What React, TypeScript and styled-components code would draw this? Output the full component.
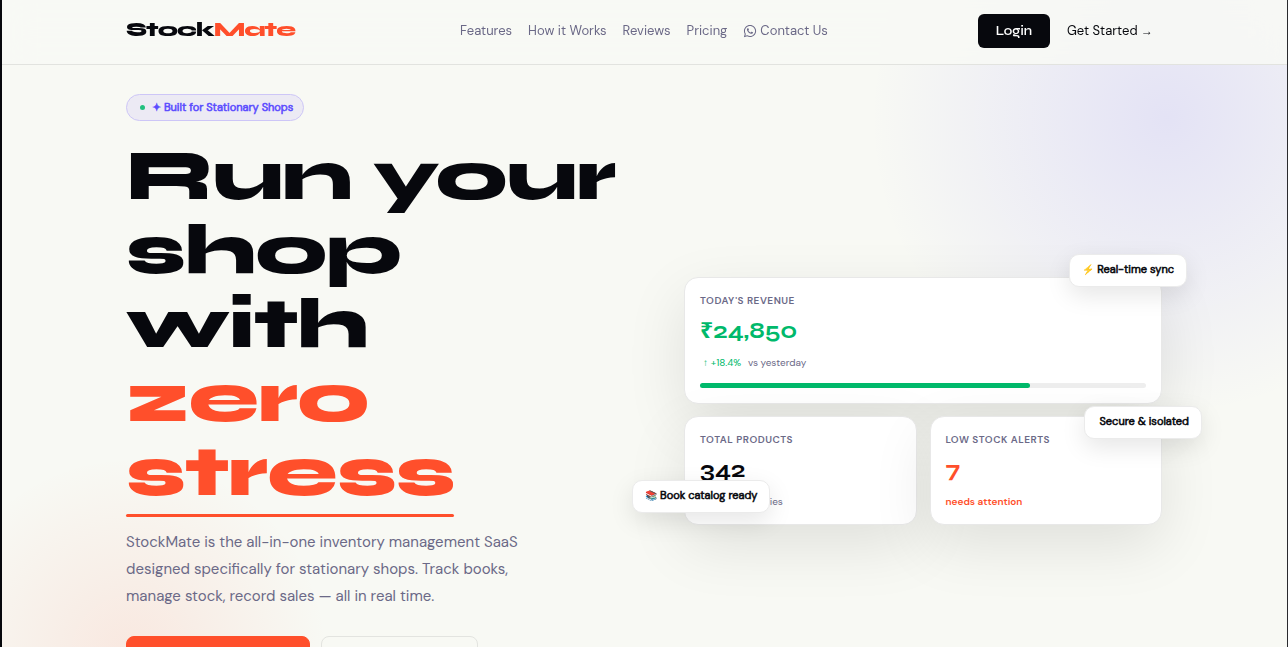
import React from "react";
import styled, { createGlobalStyle, css } from "styled-components";
import { FaWhatsapp } from "react-icons/fa";

const ink = "#07080d";
const paper = "#f8f9f4";
const muted = "#6b6987";
const coral = "#ff4f2b";
const green = "#00b96b";
const violet = "#5b4cff";

const display = `Syne, "DejaVu Sans", sans-serif`;
const body = `"DM Sans", Inter, sans-serif`;

const GlobalStyle = createGlobalStyle`
  *, *::before, *::after { box-sizing: border-box; }
  body {
    margin: 0;
    background: ${paper};
    color: ${ink};
    font-family: ${body};
  }
  a { color: inherit; text-decoration: none; }
  button { font: inherit; cursor: pointer; }
`;

const chipText = css`
  font-size: 11px;
  font-weight: 400;
  white-space: nowrap;
  -webkit-text-stroke: 0.05em currentColor;
`;

const Page = styled.div`
  position: relative;
  display: flex;
  flex-direction: column;
  height: 100vh;
  min-height: 480px;
  overflow: hidden;
  border-left: 2px solid ${ink};
  border-right: 1px solid #2a2a2e;
  background: ${paper};
`;

const Glow = styled.div<{ $size: number; $color: string }>`
  position: absolute;
  width: ${(p) => p.$size}px;
  height: ${(p) => p.$size}px;
  border-radius: 50%;
  background: radial-gradient(circle, ${(p) => p.$color} 0%, transparent 70%);
  pointer-events: none;
`;

const VioletGlow = styled(Glow)`
  top: -182px;
  right: -180px;
`;

const CoralGlow = styled(Glow)`
  bottom: -208px;
  left: -72px;
`;

const Header = styled.header`
  position: relative;
  z-index: 2;
  flex: none;
  border-bottom: 1px solid #e2e3df;
  background: rgba(248, 249, 244, 0.85);
  backdrop-filter: blur(16px);
`;

const HeaderInner = styled.div`
  display: grid;
  grid-template-columns: 1fr auto 1fr;
  align-items: center;
  max-width: 1101px;
  height: 64px;
  margin: 0 auto;
  padding: 0 33px 2px 32px;
`;

const Logo = styled.a`
  padding-bottom: 2px;
  font: 800 20px/28px ${display};
  letter-spacing: -1px;

  span { color: ${coral}; }
`;

const Nav = styled.nav`
  display: flex;
  gap: 16px;
  color: ${muted};
  font-size: 13px;
  line-height: 20px;
`;

const NavLink = styled.a`
  display: flex;
  align-items: center;
  gap: 3px;
`;

const Actions = styled.div`
  display: flex;
  justify-content: flex-end;
  align-items: center;
  gap: 8px;
`;

const LoginButton = styled.button`
  height: 34px;
  padding: 0 18px;
  border: 0;
  border-radius: 6px;
  background: ${ink};
  color: #fff;
  font-family: ${display};
  font-size: 13px;
  font-weight: 600;
`;

const StartLink = styled.a`
  padding: 0 9px;
  font-size: 13px;
  line-height: 20px;
`;

const Arrow = styled.span`
  font-family: "Noto Sans", "Liberation Sans", sans-serif;
  font-size: 12px;
  line-height: 1;
`;

const Hero = styled.main`
  position: relative;
  z-index: 1;
  display: grid;
  grid-template-columns: 1fr 1fr;
  align-items: center;
  gap: 80px;
  width: 100%;
  max-width: 1101px;
  margin: 0 auto;
  padding: 29px 33px 0 32px;
`;

const Intro = styled.section`
  display: flex;
  flex-direction: column;
  align-items: flex-start;
  min-width: 0;
  padding-bottom: 23px;
`;

const Pill = styled.p`
  display: flex;
  align-items: center;
  gap: 7px;
  height: 27px;
  margin: 0 0 18px;
  padding: 0 10px 1px 13px;
  border: 1px solid #cdc6f7;
  border-radius: 14px;
  background: #eceaf4;
  color: ${violet};
  ${chipText}
`;

const Dot = styled.span`
  width: 5px;
  height: 5px;
  border-radius: 50%;
  background: #22c07f;
`;

const Title = styled.h1`
  margin: 0;
  font: 800 71px/74px ${display};
  letter-spacing: -1px;
  white-space: nowrap;
`;

const Line = styled.span`
  display: block;
`;

const Accent = styled.span`
  display: block;
  width: fit-content;
  color: ${coral};

  &::after {
    content: "";
    display: block;
    height: 3px;
    margin-top: 5px;
    border-radius: 2px;
    background: ${coral};
  }
`;

const Lead = styled.p`
  max-width: 420px;
  margin: 12px 0 26px;
  color: ${muted};
  font-size: 15px;
  line-height: 27px;
`;

const Buttons = styled.div`
  display: flex;
  gap: 11px;
`;

const HeroButton = styled.button<{ $primary?: boolean }>`
  width: ${(p) => (p.$primary ? 184 : 157)}px;
  height: 48px;
  border: 1px solid ${(p) => (p.$primary ? coral : "#e3e4e0")};
  border-radius: 8px;
  background: ${(p) => (p.$primary ? coral : "transparent")};
  color: ${(p) => (p.$primary ? "#fff" : ink)};
  font-size: 14px;
`;

const Dashboard = styled.section`
  position: relative;
  display: grid;
  grid-template-columns: 1fr 1fr;
  gap: 12px 13px;
`;

const Card = styled.article<{ $wide?: boolean }>`
  grid-column: ${(p) => (p.$wide ? "1 / -1" : "auto")};
  padding: 16px 15px 15px;
  border: 1px solid #e8e8e8;
  border-radius: 14px;
  background: #fff;
  box-shadow: 0 20px 60px rgba(0, 0, 0, 0.1);
`;

const CardLabel = styled.h2`
  margin: 0 0 8px;
  color: ${muted};
  font-size: 10px;
  font-weight: 600;
  line-height: 14px;
  letter-spacing: 0.05em;
  text-transform: uppercase;
`;

const Value = styled.p<{ $color?: string }>`
  margin: 0;
  color: ${(p) => p.$color ?? ink};
  font: 700 23px/30px ${display};
`;

const Currency = styled.span`
  font-family: "Noto Sans", "DejaVu Sans", sans-serif;
  line-height: 1;
`;

const Note = styled.p<{ $alert?: boolean }>`
  margin: 10px 0 0;
  color: ${(p) => (p.$alert ? coral : muted)};
  font-size: 10px;
  font-weight: ${(p) => (p.$alert ? 600 : 400)};
  line-height: 14px;
`;

const Trend = styled.span`
  margin: 0 4px 0 3px;
  color: ${green};

  ${Arrow} { font-size: 10px; }
`;

const Track = styled.div`
  height: 5px;
  margin-top: 13px;
  border-radius: 3px;
  background: #eeeeee;
`;

const Fill = styled.div`
  height: 100%;
  border-radius: 3px;
  background: ${green};
`;

const Tag = styled.div`
  position: absolute;
  display: flex;
  align-items: center;
  gap: 3px;
  height: 33px;
  padding: 0 12px 2px;
  border: 1px solid #ebebeb;
  border-radius: 10px;
  background: #fff;
  box-shadow: 0 8px 24px rgba(0, 0, 0, 0.1);
  ${chipText}
`;

const Emoji = styled.span`
  font-size: 10px;
  -webkit-text-stroke: 0;
`;

const SyncTag = styled(Tag)`
  top: -23px;
  right: -25px;
`;

const SecureTag = styled(Tag)`
  top: 129px;
  right: -40px;
  padding-left: 14px;
`;

const CatalogTag = styled(Tag)`
  bottom: 12px;
  left: -52px;
`;

export default function App() {
  const revenueProgress = 74;

  return (
    <>
      <GlobalStyle />
      <Page>
        <VioletGlow $size={600} $color="rgba(91, 76, 255, 0.13)" />
        <CoralGlow $size={400} $color="rgba(255, 79, 43, 0.1)" />
        <Header>
          <HeaderInner>
            <Logo href="#">
              Stock<span>Mate</span>
            </Logo>
            <Nav>
              <NavLink href="#features">Features</NavLink>
              <NavLink href="#how">How it Works</NavLink>
              <NavLink href="#reviews">Reviews</NavLink>
              <NavLink href="#pricing">Pricing</NavLink>
              <NavLink href="#contact">
                <FaWhatsapp size={14} /> Contact Us
              </NavLink>
            </Nav>
            <Actions>
              <LoginButton type="button">Login</LoginButton>
              <StartLink href="#start">
                Get Started <Arrow>→</Arrow>
              </StartLink>
            </Actions>
          </HeaderInner>
        </Header>
        <Hero>
          <Intro>
            <Pill>
              <Dot />✦ Built for Stationary Shops
            </Pill>
            <Title>
              <Line>Run your</Line>
              <Line>shop</Line>
              <Line>with</Line>
              <Accent>
                <Line>zero</Line>
                <Line>stress</Line>
              </Accent>
            </Title>
            <Lead>
              StockMate is the all-in-one inventory management SaaS designed
              specifically for stationary shops. Track books, manage stock,
              record sales — all in real time.
            </Lead>
            <Buttons>
              <HeroButton type="button" $primary>
                Get Started →
              </HeroButton>
              <HeroButton type="button">How it Works</HeroButton>
            </Buttons>
          </Intro>
          <Dashboard>
            <Card $wide>
              <CardLabel>Today's Revenue</CardLabel>
              <Value $color={green}>
                <Currency>₹</Currency>24,850
              </Value>
              <Note>
                <Trend>
                  <Arrow>↑</Arrow> +18.4%
                </Trend>{" "}
                vs yesterday
              </Note>
              <Track>
                <Fill style={{ width: `${revenueProgress}%` }} />
              </Track>
            </Card>
            <Card>
              <CardLabel>Total Products</CardLabel>
              <Value>342</Value>
              <Note>over 12 categories</Note>
            </Card>
            <Card>
              <CardLabel>Low Stock Alerts</CardLabel>
              <Value $color={coral}>7</Value>
              <Note $alert>needs attention</Note>
            </Card>
            <SyncTag>
              <Emoji>⚡</Emoji>Real-time sync
            </SyncTag>
            <SecureTag>Secure &amp; isolated</SecureTag>
            <CatalogTag>
              <Emoji>📚</Emoji>Book catalog ready
            </CatalogTag>
          </Dashboard>
        </Hero>
      </Page>
    </>
  );
}
